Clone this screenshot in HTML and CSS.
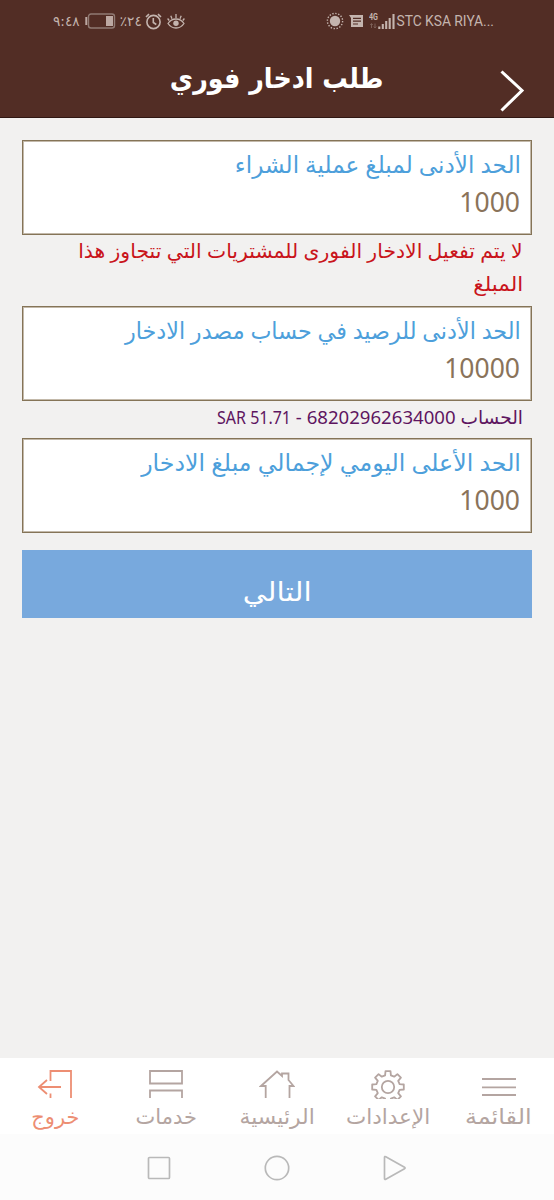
FILE: index.html
```
<!DOCTYPE html>
<html lang="ar">
<head>
<meta charset="utf-8">
<title>طلب ادخار فوري</title>
<link rel="stylesheet" href="styles.css">
</head>
<body>
<div class="screen">
  <header class="top">
    <div class="status">
      <div class="status-side">
        <span class="clock">٩:٤٨</span>
        <svg class="battery" width="31" height="16" viewBox="0 0 31 16"><path d="M1.300 4v8" stroke="#bca8a2" stroke-width="2"/><rect x="3.500" y="1" width="26" height="14" rx="2.500" fill="none" stroke="#907a73" stroke-width="1.400"/><rect x="21" y="3" width="7" height="10" fill="#bca8a2"/></svg>
        <span class="percent">٪٢٤</span>
        <svg class="alarm" width="17" height="17" viewBox="0 0 17 17" fill="none" stroke="#c4b4ae" stroke-width="1.600"><circle cx="8.500" cy="9" r="6.600"/><path d="M8.300 5v4.500l3 2M1 4l3-2.800M16 4l-3-2.800"/></svg>
        <svg class="eye" width="18" height="17" viewBox="0 0 18 17" fill="none" stroke="#c4b4ae" stroke-width="1.300"><path d="M1 10.500c4-6 12-6 16 0-4 6-12 6-16 0z"/><circle cx="9" cy="10.300" r="2.700" fill="#c4b4ae" stroke="none"/><path d="M9 1v4M3.800 2.800l1.200 3M14.200 2.800l-1.200 3M.6 5.500l1.600 2M17.400 5.500l-1.600 2"/></svg>
      </div>
      <div class="status-side">
        <svg class="sun" width="18" height="18" viewBox="0 0 18 18"><circle cx="9" cy="9" r="5.200" fill="#c4b4ae"/><circle cx="9" cy="9" r="7.600" fill="none" stroke="#c4b4ae" stroke-width="1.400" stroke-dasharray="1.400 1.584"/></svg>
        <svg class="msg" width="15" height="13" viewBox="0 0 15 13"><path d="M0 0h14v12H2V3z" fill="#c4b4ae"/><path d="M4 3.400h8M4 6.200h8M4 9h5" stroke="#522d25" stroke-width="1.200"/></svg>
        <svg class="signal" width="27" height="18" viewBox="0 0 27 18"><text class="net" x="0" y="8" textLength="9" lengthAdjust="spacingAndGlyphs">4G</text><path d="M2.500 12v4M1.300 13l1.200-1.500L3.700 13M6 11.500v4M4.800 14.500L6 16l1.200-1.500" stroke="#80645c" stroke-width=".9" fill="none"/><path d="M10.300 17v-2.500M13.800 17v-5M17.200 17V9M20.700 17V6M24.500 17V2" stroke="#c4b4ae" stroke-width="2.100"/></svg>
        <span class="carrier">STC KSA RIYA...</span>
      </div>
    </div>
    <div class="titlebar">
      <h1 class="title"><span>طلب ادخار فوري</span></h1>
      <svg class="chevron" width="25" height="42" viewBox="0 0 25 42"><path d="M1.500 1.500L22 20.500 1.500 40.500" fill="none" stroke="#fff" stroke-width="3"/></svg>
    </div>
  </header>
  <main class="form" dir="rtl">
    <div class="field"><label class="label"><span class="min-purchase">الحد الأدنى لمبلغ عملية الشراء</span></label><div class="value">1000</div></div>
    <p class="error"><span class="error-first">لا يتم تفعيل الادخار الفورى للمشتريات التي تتجاوز هذا</span><br><span class="error-last">المبلغ</span></p>
    <div class="field"><label class="label"><span class="min-balance">الحد الأدنى للرصيد في حساب مصدر الادخار</span></label><div class="value">10000</div></div>
    <p class="account">الحساب <bdi>68202962634000</bdi> - <bdi class="balance">SAR 51.71</bdi></p>
    <div class="field"><label class="label"><span class="max-daily">الحد الأعلى اليومي لإجمالي مبلغ الادخار</span></label><div class="value">1000</div></div>
    <button class="next"><span>التالي</span></button>
  </main>
  <nav class="tabs">
    <a class="tab exit"><svg width="36" height="30" viewBox="0 0 36 30"><path d="M13.500 12V2H34v27M13.500 24.500V29M24 18H1.500M10 11L2 18l8 7"/></svg><span>خروج</span></a>
    <a class="tab services"><svg width="36" height="30" viewBox="0 0 36 30"><path d="M2 2h32v12.500H2zM2 29v-7.500h32V29"/></svg><span>خدمات</span></a>
    <a class="tab home"><svg width="36" height="30" viewBox="0 0 36 30"><path d="M6.700 29V17H2L18 2.500l5 4.500V4.500h6.500V11l5 6h-4v12"/></svg><span>الرئيسية</span></a>
    <a class="tab settings"><svg width="36" height="30" viewBox="0 0 36 30"><circle cx="18" cy="18" r="6.200"/><path stroke-linejoin="round" d="M15.100 6.400L15.500 2.200h5L20.900 6.400 24.200 7.700 27.400 5.100 30.900 8.600 28.200 11.900 29.600 15.100 33.800 15.500v5L29.600 20.900 28.200 24.100 30.900 27.400 27.400 30.900 24.200 28.300 20.900 29.600 20.500 33.800h-5L15.100 29.600 11.800 28.300 8.600 30.900 5.100 27.400 7.800 24.100 6.400 20.900 2.200 20.500v-5L6.400 15.100 7.800 11.900 5.100 8.600 8.600 5.100 11.800 7.700z"/></svg><span>الإعدادات</span></a>
    <a class="tab menu"><svg width="36" height="30" viewBox="0 0 36 30"><path d="M1 10h34M1 18.300h34M1 26h34"/></svg><span>القائمة</span></a>
  </nav>
  <div class="system">
    <svg width="26" height="26" viewBox="0 0 26 26"><rect x="2.500" y="2.500" width="21" height="21" rx="1"/></svg>
    <svg width="26" height="26" viewBox="0 0 26 26"><circle cx="13" cy="13" r="11.700"/></svg>
    <svg width="26" height="26" viewBox="0 0 26 26"><path d="M2.500 2.500q0-1.500 1.300-.8L22.500 12.200q1.200.8 0 1.500L3.800 24.200q-1.300.8-1.300-.8z"/></svg>
  </div>
</div>
</body>
</html>
```
FILE: styles.css
```
* { box-sizing: border-box; }
body { margin: 0; font-family: "Noto Sans", "DejaVu Sans", sans-serif; }
span, bdi { display: inline-block; white-space: nowrap; }
.screen { width: 554px; height: 1200px; display: flex; flex-direction: column; background: #f2f1f0; overflow: hidden; }
.top { height: 118px; flex: none; background: #522d25; border-bottom: 1px solid #301713; }
.status { height: 42px; display: flex; justify-content: space-between; padding: 0 60px 0 53px; color: #c4b4ae; }
.status-side { display: flex; align-items: center; }
.clock, .percent { font: 13.700px/20px "DejaVu Sans", sans-serif; }
.battery { margin-left: 5px; }
.percent { margin-left: 4px; }
.percent, .clock { letter-spacing: -.2px; }
.alarm { margin-left: 3px; }
.eye { margin-left: 5px; }
.msg { margin-left: 5px; }
.signal { margin-left: 5px; }
.net { font: bold 9px Roboto, sans-serif; fill: #c4b4ae; }
.carrier { font: 13.800px/20px Roboto, sans-serif; }
.titlebar { height: 75px; display: grid; grid-template-columns: 1fr 54px; padding-left: 54px; }
.title { margin: 17px 0 0; text-align: center; color: #fff; font: bold 28px/40px "DejaVu Sans", sans-serif; }
.title span { transform: scaleX(.908); }
.chevron { margin: 28px 0 0; }
.form { flex: 1; padding: 22px 22px 0; }
.form span { transform-origin: right 60%; }
.field { height: 95px; border: 1px solid #857457; box-shadow: inset 0 0 0 1px #c3b9aa; background: #fff; padding: 5px 10px 0; }
.label { display: block; height: 36px; line-height: 36px; font-size: 22px; color: #4d9fdb; }
.form .min-purchase { transform: scale(1.052, 1.06); }
.form .min-balance { transform: scale(1.013, 1.06); }
.form .max-daily { transform: scale(1.076, 1.06); }
.value { height: 40px; line-height: 40px; font-size: 26.500px; color: #8a735a; padding-right: 1px; }
.error { margin: 0; height: 71px; font-size: 19px; line-height: 33px; color: #c9141b; padding: 0 9px; }
.form .error-first { transform: scale(1.072, 1.05); }
.form .error-last { transform: scale(1.130, 1.05); }
.account { margin: 0; height: 37px; line-height: 31px; font-size: 18.600px; color: #5e1560; padding: 0 9px; white-space: nowrap; }
.balance { transform: scaleX(.86); transform-origin: right; }
.next { display: block; width: 100%; height: 68px; margin-top: 17px; border: 0; padding: 15px 0 0; background: #78a9dd; color: #fff; font: 26px/40px "DejaVu Sans", sans-serif; }
.next span { transform: scaleX(1.140); transform-origin: center; }
.tabs { height: 76px; flex: none; background: #fff; display: grid; grid-template-columns: repeat(5, 1fr); color: #b4a5a1; }
.tab { display: flex; flex-direction: column; align-items: center; padding-top: 11px; font-size: 21px; line-height: 34px; }
.tab svg { fill: none; stroke: currentColor; stroke-width: 1.800; flex: none; }
.exit { color: #ed8e73; }
.home span { transform: scaleX(1.040); }
.settings span { transform: scaleX(1.025); }
.menu span { transform: scaleX(1.140); }
.system { height: 66px; flex: none; background: #fcfcfc; display: flex; justify-content: center; gap: 92px; padding-top: 21px; }
.system svg { fill: none; stroke: #b9b9b9; stroke-width: 1.700; }
```
